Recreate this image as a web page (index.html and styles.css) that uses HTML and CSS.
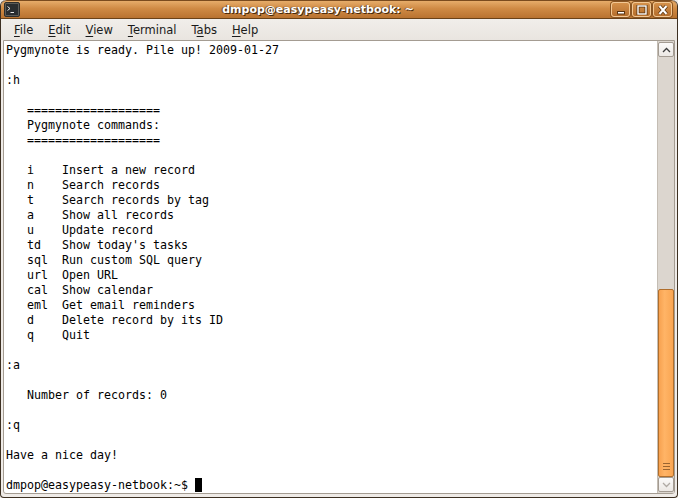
FILE: index.html
```html
<!DOCTYPE html>
<html lang="en">

<head>
  <meta charset="UTF-8">
  <title>dmpop@easypeasy-netbook: ~</title>
  <link rel="stylesheet" href="styles.css">
</head>

<body>

  <div class="window">
    <div class="titlebar">
      <div class="app-icon">
        <svg width="16" height="15" viewBox="0 0 16 15">
          <rect x="0.5" y="0.5" width="15" height="14" rx="1.5" fill="#5c5c58" stroke="#2e2e2c" />
          <rect x="2" y="2" width="12" height="11" fill="#2a2d2f" />
          <path d="M3.5 4.5 L6 6.5 L3.5 8.5" stroke="#e8e8e8" stroke-width="1" fill="none" />
          <path d="M6.5 10.5 H10" stroke="#e8e8e8" stroke-width="1" />
        </svg>
      </div>
      <div class="title">dmpop@easypeasy-netbook: ~</div>
      <div class="buttons">
        <div class="wbtn">
          <svg width="14" height="10" viewBox="0 0 14 10"><rect x="3.5" y="6.5" width="7" height="2.5" fill="#fff" stroke="#5a3410" stroke-width="1" /></svg>
        </div>
        <div class="wbtn">
          <svg width="14" height="10" viewBox="0 0 14 10"><rect x="3" y="1" width="8" height="8" fill="none" stroke="#5a3410" stroke-width="3" /><rect x="3" y="1" width="8" height="8" fill="none" stroke="#fff" stroke-width="1.4" /></svg>
        </div>
        <div class="wbtn">
          <svg width="14" height="10" viewBox="0 0 14 10"><path d="M3.5 1 L10.5 9 M10.5 1 L3.5 9" stroke="#5a3410" stroke-width="3.6" /><path d="M3.5 1 L10.5 9 M10.5 1 L3.5 9" stroke="#fff" stroke-width="2" /></svg>
        </div>
      </div>
    </div>

    <div class="menubar">
      <span class="menu"><u>F</u>ile</span>
      <span class="menu"><u>E</u>dit</span>
      <span class="menu"><u>V</u>iew</span>
      <span class="menu"><u>T</u>erminal</span>
      <span class="menu">T<u>a</u>bs</span>
      <span class="menu"><u>H</u>elp</span>
    </div>

    <div class="body">
      <pre class="screen">Pygmynote is ready. Pile up! 2009-01-27

:h

   ===================
   Pygmynote commands:
   ===================

   i    Insert a new record
   n    Search records
   t    Search records by tag
   a    Show all records
   u    Update record
   td   Show today's tasks
   sql  Run custom SQL query
   url  Open URL
   cal  Show calendar
   eml  Get email reminders
   d    Delete record by its ID
   q    Quit

:a

   Number of records: 0

:q

Have a nice day!

dmpop@easypeasy-netbook:~$ <span class="cursor"> </span></pre>
      <div class="scrollbar">
        <div class="sbtn">
          <svg width="9" height="6" viewBox="0 0 9 6"><path d="M1 5 L4.5 1.5 L8 5" stroke="#3c3c3c" stroke-width="1.3" fill="none" /></svg>
        </div>
        <div class="trough">
          <div class="thumb">
            <div class="grip"></div>
          </div>
        </div>
        <div class="sbtn down">
          <svg width="9" height="6" viewBox="0 0 9 6"><path d="M1 1 L4.5 4.5 L8 1" stroke="#b0aaa4" stroke-width="1.3" fill="none" /></svg>
        </div>
      </div>
    </div>
  </div>

</body>

</html>
```

FILE: styles.css
```css
* {
  padding: 0;
  margin: 0;
  box-sizing: border-box;
}

body {
  background: #efebe7;
}

.window {
  width: 678px;
  height: 498px;
  display: flex;
  flex-direction: column;
  background: #efebe7;
  border: 1px solid #3d3022;
  border-top: none;
  border-radius: 6px 6px 4px 4px;
  overflow: hidden;
}

.titlebar {
  height: 19px;
  flex: none;
  display: flex;
  align-items: center;
  background: linear-gradient(#e6ac6a, #cf8a44 45%, #b97330);
  border-top: 1px solid #7a4b1e;
  border-bottom: 1px solid #6a4218;
  border-radius: 6px 6px 0 0;
}

.app-icon {
  width: 16px;
  height: 15px;
  margin-left: 3px;
  display: flex;
}

.title {
  flex: 1;
  text-align: center;
  font-family: "DejaVu Sans", sans-serif;
  font-weight: bold;
  font-size: 11px;
  color: #fff;
  text-shadow: 1px 1px 0 #4a2a0c, -1px 0 1px #6a3e14;
  padding-left: 5px;
}

.buttons {
  display: flex;
  gap: 2px;
  margin-right: 5px;
}

.wbtn {
  width: 19px;
  height: 15px;
  border: 1px solid #f3c894;
  border-radius: 3px;
  background: linear-gradient(#d4904a, #b56e2c);
  box-shadow: 0 0 0 1px #8a5522;
  display: flex;
  align-items: center;
  justify-content: center;
}

.menubar {
  height: 21px;
  flex: none;
  display: flex;
  align-items: center;
  padding-left: 13px;
  background: linear-gradient(#f1eeea, #e9e5e0);
  font-family: "DejaVu Sans", sans-serif;
  font-size: 11.5px;
  color: #1a1a1a;
}

.menu {
  margin-right: 15px;
}

.menu u {
  text-decoration-thickness: 1px;
  text-underline-offset: 2px;
}

.body {
  flex: 1;
  display: flex;
  margin: 0 2px 3px 2px;
  border: 1px solid #a49c92;
  background: #fff;
  border-radius: 0 0 3px 3px;
  min-height: 0;
}

.screen {
  flex: 1;
  font-family: "DejaVu Sans Mono", monospace;
  font-size: 11.63px;
  line-height: 15px;
  color: #000;
  padding: 2px 0 0 2px;
  overflow: hidden;
}

.cursor {
  background: #000;
}

.scrollbar {
  width: 17px;
  flex: none;
  display: flex;
  flex-direction: column;
  background: #dcd6cf;
  border-left: 1px solid #c4bdb4;
  padding: 1px 0;
}

.sbtn {
  height: 15px;
  flex: none;
  background: linear-gradient(#fbfaf9, #ece8e4);
  border: 1px solid #a39b92;
  border-radius: 2px;
  display: flex;
  align-items: center;
  justify-content: center;
}

.trough {
  flex: 1;
  display: flex;
  flex-direction: column;
  justify-content: flex-end;
}

.thumb {
  height: 188px;
  background: linear-gradient(90deg, #f7a250, #ffb466 40%, #f9a552);
  border: 1px solid #b06e2c;
  border-radius: 2px;
  display: flex;
  align-items: flex-end;
  justify-content: center;
  padding-bottom: 6px;
}

.grip {
  width: 7px;
  height: 7px;
  background: repeating-linear-gradient(#9a6430 0 1px, transparent 1px 3px);
}
```
